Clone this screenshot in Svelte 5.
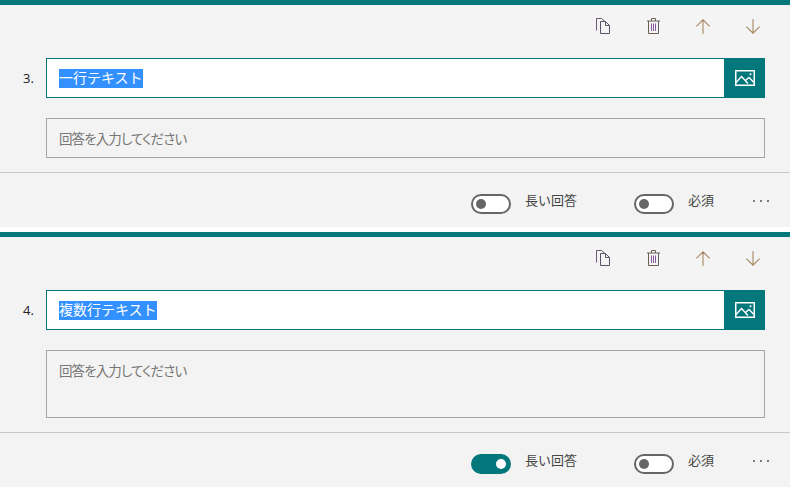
<script>
  const questions = [
    { num: '3.', title: '一行テキスト', long: false },
    { num: '4.', title: '複数行テキスト', long: true }
  ]
</script>

<div class="page">
  {#each questions as q}
    <section class="card">
      <div class="tools">
        <div class="tool-group">
          <button class="tool" aria-label="コピー">
            <svg width="14" height="16" viewBox="0 0 14 16" fill="none" stroke="#6d5a72" stroke-width="1">
              <path d="M0.5 12.5V0.5H5.5L9 3.5" />
              <path d="M4.5 15.5V3.5H9.5L13.5 7.5V15.5Z" stroke="#55566a" />
              <path d="M9.5 3.5V7.5H13.5" stroke="#55566a" />
            </svg>
          </button>
          <button class="tool" aria-label="削除">
            <svg width="13" height="16" viewBox="0 0 13 16" fill="none" stroke="#6a6058" stroke-width="1">
              <path d="M0 3H13M4.5 3V0.5H8.5V3" />
              <path d="M1.5 3V15.5H11.5V3" />
              <path d="M4.5 5.5V13M6.5 5.5V13M8.5 5.5V13" stroke="#85589a" />
            </svg>
          </button>
          <button class="tool" aria-label="上へ">
            <svg width="14" height="15" viewBox="0 0 14 15" fill="none" stroke="#a58660" stroke-width="1.1">
              <path d="M7 15V0.8M0.4 7.4L7 0.8L13.6 7.4" />
            </svg>
          </button>
          <button class="tool" aria-label="下へ">
            <svg width="14" height="15" viewBox="0 0 14 15" fill="none" stroke="#a58660" stroke-width="1.1">
              <path d="M7 0V14.2M0.4 7.6L7 14.2L13.6 7.6" />
            </svg>
          </button>
        </div>
      </div>

      <div class="question">
        <span class="num">{q.num}</span>
        <div class="fields">
          <div class="title-row">
            <div class="title-input"><span class="selected">{q.title}</span></div>
            <button class="image-btn" aria-label="画像">
              <svg width="20" height="16" viewBox="0 0 20 16" fill="none" stroke="#fff">
                <rect x="0.75" y="0.75" width="18.5" height="14.5" stroke-width="1.5" />
                <path d="M1 12.5L6.5 6.5L13 13.5M10.5 10.5L14 7.5L19 12.5" stroke-width="1.4" />
                <circle cx="15.5" cy="4.2" r="1" fill="#fff" stroke="none" />
              </svg>
            </button>
          </div>
          <div class="answer" class:tall={q.long}>回答を入力してください</div>
        </div>
      </div>

      <div class="footer">
        <div class="option long-opt">
          <span class="toggle" class:on={q.long}><span class="knob"></span></span>
          <span class="label">長い回答</span>
        </div>
        <div class="option req-opt">
          <span class="toggle"><span class="knob"></span></span>
          <span class="label">必須</span>
        </div>
        <div class="more" aria-label="その他">
          <span class="dot"></span><span class="dot"></span><span class="dot"></span>
        </div>
      </div>
    </section>
  {/each}
</div>

<style>
  :global(body) {
    margin: 0;
    background: #fff;
  }

  .page {
    width: 790px;
    height: 487px;
    overflow: hidden;
    display: flex;
    flex-direction: column;
    gap: 5px;
    font-family: "Noto Sans CJK JP", "Noto Sans", sans-serif;
  }

  .card {
    background: #f3f3f3;
    border-top: 5px solid #03787c;
    flex-shrink: 0;
  }

  .tools {
    display: flex;
    justify-content: flex-end;
    padding: 3px 12px 0 0;
  }

  .tool-group {
    display: flex;
    background: #f4f4f4;
  }

  .tool {
    width: 50px;
    height: 36px;
    padding: 0;
    border: 0;
    background: none;
    display: flex;
    align-items: center;
    justify-content: center;
  }

  .question {
    display: flex;
    padding: 14px 25px 0 23px;
  }

  .num {
    width: 23px;
    flex-shrink: 0;
    margin-top: 10px;
    font-family: "Open Sans", sans-serif;
    font-size: 13px;
    line-height: 20px;
    color: #222;
  }

  .fields {
    flex: 1;
    display: flex;
    flex-direction: column;
    gap: 20px;
  }

  .title-row {
    display: flex;
    height: 40px;
  }

  .title-input {
    flex: 1;
    box-sizing: border-box;
    border: 1px solid #03787c;
    border-right: 0;
    background: #fff;
    padding-left: 12px;
    display: flex;
    align-items: center;
  }

  .selected {
    background: #3390ff;
    color: #fff;
    font-size: 14px;
    line-height: 17px;
    height: 19px;
  }

  .image-btn {
    width: 41px;
    padding: 0;
    border: 0;
    background: #03787c;
    display: flex;
    align-items: center;
    justify-content: center;
  }

  .answer {
    box-sizing: border-box;
    height: 40px;
    border: 1px solid #a6a6a6;
    padding: 10px 12px 0;
    font-size: 13.5px;
    line-height: 19px;
    letter-spacing: -0.9px;
    font-feature-settings: "palt";
    color: #767676;
  }

  .answer.tall {
    height: 68px;
  }

  .footer {
    margin-top: 14px;
    border-top: 1px solid #c8c8c8;
    height: 54px;
    display: flex;
    padding-right: 21px;
    justify-content: flex-end;
  }

  .option {
    display: flex;
  }

  .long-opt {
    margin-right: 57px;
  }

  .req-opt {
    margin-right: 39px;
  }

  .toggle {
    box-sizing: border-box;
    width: 40px;
    height: 20px;
    margin-top: 21px;
    border: 2px solid #666;
    border-radius: 10px;
    background: #fff;
    display: flex;
    align-items: center;
    padding: 0 3px;
  }

  .knob {
    width: 10px;
    height: 10px;
    border-radius: 50%;
    background: #666;
  }

  .toggle.on {
    background: #03787c;
    border-color: #03787c;
    justify-content: flex-end;
  }

  .toggle.on .knob {
    background: #fff;
  }

  .label {
    margin: 17px 0 0 14px;
    font-size: 13px;
    line-height: 19px;
    color: #444;
  }

  .more {
    display: flex;
    gap: 5px;
    margin-top: 27px;
    height: 2px;
  }

  .dot {
    width: 2px;
    height: 2px;
    border-radius: 50%;
    background: #555;
  }
</style>
